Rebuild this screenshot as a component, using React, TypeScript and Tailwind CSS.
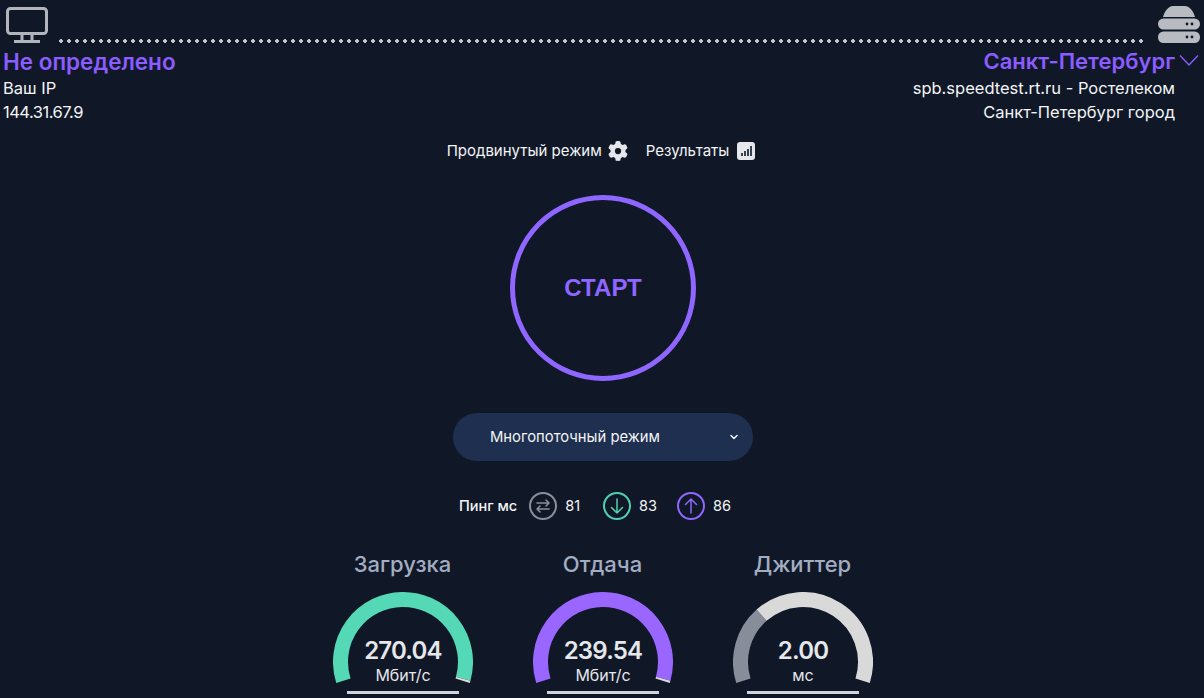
import { ChevronDown } from 'lucide-react'
import { FaGear } from 'react-icons/fa6'

const SANS = "font-['Inter','Liberation_Sans',sans-serif]"

function polar(r: number, deg: number) {
  const a = ((deg - 90) * Math.PI) / 180
  return `${70 + r * Math.cos(a)} ${70 + r * Math.sin(a)}`
}

function arc(from: number, to: number) {
  const large = to - from > 180 ? 1 : 0
  return `M ${polar(62.5, from)} A 62.5 62.5 0 ${large} 1 ${polar(62.5, to)}`
}

function Gauge({ title, value, unit, segments }: { title: string; value: string; unit: string; segments: { from: number; to: number; color: string }[] }) {
  return (
    <div className="w-[200px] flex flex-col items-center">
      <div className={`${SANS} text-[22px] leading-[30px] font-medium text-[#a3adc2] pr-[1px]`}>{title}</div>
      <div className="relative w-[140px] h-[106px] mt-[13px]">
        <svg width="140" height="94" viewBox="0 0 140 94" className="block">
          {segments.map((s) => (
            <path key={s.from} d={arc(s.from, s.to)} fill="none" stroke={s.color} strokeWidth="15" />
          ))}
        </svg>
        <div className="absolute left-0 right-0 top-[44px] flex flex-col items-center text-[#e5e7eb]">
          <div className={`${SANS} text-[24px] leading-[29px] font-semibold tracking-[-0.8px]`}>{value}</div>
          <div className={`${SANS} text-[16px] leading-[20px]`}>{unit}</div>
        </div>
        <div className="absolute left-[14px] top-[99px] w-[112px] h-[3px] bg-[#d1d5db]" />
      </div>
    </div>
  )
}

function PingIcon({ color, children }: { color: string; children: React.ReactNode }) {
  return (
    <svg width="28" height="28" viewBox="0 0 28 28" fill="none" stroke={color} strokeWidth="1.5" strokeLinecap="round" strokeLinejoin="round">
      <circle cx="14" cy="14" r="13" strokeWidth="2" />
      {children}
    </svg>
  )
}

export default function App() {
  return (
    <div className={`${SANS} w-full h-[698px] overflow-hidden bg-[#101828] text-[#f3f4f6]`}>
      <div className="flex items-end h-[46px] pl-[6px] pr-[4px]">
        <svg width="42" height="36" viewBox="0 0 42 36" fill="none" className="shrink-0 mb-[3px]">
          <rect x="1.5" y="1.5" width="39" height="25" rx="3" stroke="#b3b5bd" strokeWidth="3" />
          <path d="M8 34.5h26M16 28v6M26 28v6" stroke="#b3b5bd" strokeWidth="3" />
        </svg>
        <div className="flex-1 ml-[9px] mr-[12px] mb-[3px] h-[4px] bg-[radial-gradient(circle,#c4c6cc_1.8px,transparent_2px)] bg-[length:8px_4px]" />
        <svg width="42" height="37" viewBox="0 0 42 37" className="shrink-0 mb-[3px]">
          <path d="M5 11C7 4 11 0 15 0h12c4 0 8 4 10 11z" fill="#b9bbc3" />
          <rect x="0" y="12.5" width="42" height="11" rx="5.5" fill="#b9bbc3" />
          <rect x="0" y="25.5" width="42" height="11.5" rx="5.5" fill="#b9bbc3" />
          <circle cx="29" cy="18" r="1.4" fill="#101828" />
          <circle cx="34" cy="18" r="1.4" fill="#101828" />
          <circle cx="29" cy="31" r="1.4" fill="#101828" />
          <circle cx="34" cy="31" r="1.4" fill="#101828" />
        </svg>
      </div>

      <div className="flex justify-between pl-[3px] pr-[29px] mt-[1px]">
        <div>
          <div className="text-[22.5px] leading-[29px] font-semibold text-[#8b5cff]">Не определено</div>
          <div className="text-[16.5px] leading-[24px]">Ваш IP</div>
          <div className="text-[16.5px] leading-[24px] tracking-[-0.5px]">144.31.67.9</div>
        </div>
        <div className="relative text-right">
          <div className="text-[22px] leading-[29px] font-semibold text-[#8b5cff]">Санкт-Петербург</div>
          <svg width="20" height="13" viewBox="0 0 20 13" fill="none" stroke="#8b5cff" strokeWidth="1.4" className="absolute left-full top-[7px] ml-[4px]">
            <path d="M1 1.5 10 11l9-9.5" />
          </svg>
          <div className="text-[16.5px] leading-[24px]">spb.speedtest.rt.ru - Ростелеком</div>
          <div className="text-[16.5px] leading-[24px]">Санкт-Петербург город</div>
        </div>
      </div>

      <div className="flex justify-center items-center h-[24px] mt-[15px] pr-[2px] text-[15px]">
        <span>Продвинутый режим</span>
        <FaGear className="w-[20px] h-[20px] ml-[6px] text-[#e5e7eb]" />
        <span className="ml-[18px]">Результаты</span>
        <span className="ml-[8px] w-[18px] h-[18px] rounded-[3px] bg-[#e5e7eb] flex items-end justify-center gap-[1px] pb-[4px]">
          <i className="block w-[2px] h-[3px] bg-[#374151]" />
          <i className="block w-[2px] h-[5px] bg-[#374151]" />
          <i className="block w-[2px] h-[7px] bg-[#374151]" />
          <i className="block w-[2px] h-[10px] bg-[#374151]" />
        </span>
      </div>

      <div className="flex justify-center pl-[2px] mt-[32px]">
        <div className="w-[186px] h-[186px] rounded-full border-[5px] border-[#8f66ff] flex items-center justify-center font-['Liberation_Sans',sans-serif] text-[24px] font-bold text-[#8f66ff]">
          СТАРТ
        </div>
      </div>

      <div className="flex justify-center pl-[2px] mt-[32px]">
        <div className="relative w-[300px] h-[48px] rounded-[24px] bg-[#1e2f4f] flex items-center pl-[37px] text-[14.8px]">
          Многопоточный режим
          <ChevronDown className="absolute right-[13px] top-[18px] w-[12px] h-[12px]" strokeWidth={3} />
        </div>
      </div>

      <div className="flex justify-center items-center h-[28px] mt-[31px] pr-[14px] text-[14.5px]">
        <span className="font-medium">Пинг мс</span>
        <span className="ml-[12px]">
          <PingIcon color="#8a8f99">
            <path d="M8 11h12M17 8l3 3M20 17H8M11 20l-3-3M20 11l-3 3M8 17l3-3" />
          </PingIcon>
        </span>
        <span className="ml-[8px]">81</span>
        <span className="ml-[23px]">
          <PingIcon color="#4fd1b0">
            <path d="M14 7v14M8.5 15.5 14 21l5.5-5.5" />
          </PingIcon>
        </span>
        <span className="ml-[8px]">83</span>
        <span className="ml-[20px]">
          <PingIcon color="#8f66ff">
            <path d="M14 21V7M8.5 12.5 14 7l5.5 5.5" />
          </PingIcon>
        </span>
        <span className="ml-[8px]">86</span>
      </div>

      <div className="flex justify-center pl-[2px] mt-[29px]">
        <Gauge
          title="Загрузка"
          value="270.04"
          unit="Мбит/с"
          segments={[
            { from: -107.4, to: 105.5, color: '#55d8b5' },
            { from: 105.5, to: 107.4, color: '#d9d9d9' },
          ]}
        />
        <Gauge
          title="Отдача"
          value="239.54"
          unit="Мбит/с"
          segments={[
            { from: -107.4, to: 105.5, color: '#9966ff' },
            { from: 105.5, to: 107.4, color: '#d9d9d9' },
          ]}
        />
        <Gauge
          title="Джиттер"
          value="2.00"
          unit="мс"
          segments={[
            { from: -107.4, to: -41.5, color: '#878d99' },
            { from: -41.5, to: 107.4, color: '#d9d9d9' },
          ]}
        />
      </div>
    </div>
  )
}
